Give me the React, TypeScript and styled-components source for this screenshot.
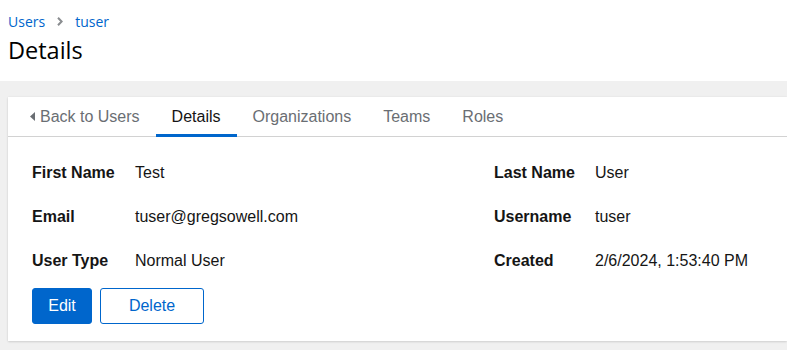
import React from 'react';
import styled, { createGlobalStyle } from 'styled-components';

const fields = [
  { label: 'First Name', value: 'Test' },
  { label: 'Last Name', value: 'User' },
  { label: 'Email', value: 'tuser@gregsowell.com' },
  { label: 'Username', value: 'tuser' },
  { label: 'User Type', value: 'Normal User' },
  { label: 'Created', value: '2/6/2024, 1:53:40 PM' },
];

const tabs = ['Details', 'Organizations', 'Teams', 'Roles'];

const App = () => {
  return (
    <>
      <GlobalStyle />
      <Page>
        <Header>
          <Breadcrumb>
            <Crumb>Users</Crumb>
            <Divider>
              <svg width="6" height="9" viewBox="0 0 6 9">
                <path d="M1 0.8 L4.6 4.5 L1 8.2" fill="none" stroke="#8a8d90" strokeWidth="2" />
              </svg>
            </Divider>
            <Crumb>tuser</Crumb>
          </Breadcrumb>
          <Title>Details</Title>
        </Header>
        <Main>
          <Card>
            <TabList>
              <Tab>
                <svg width="5" height="9" viewBox="0 0 5 9">
                  <path d="M5 0 L0 4.5 L5 9 Z" fill="#6a6e73" />
                </svg>
                Back to Users
              </Tab>
              {tabs.map((t) => (
                <Tab key={t} active={t === 'Details'}>
                  {t}
                </Tab>
              ))}
            </TabList>
            <Body>
              <FieldGrid>
                {fields.map((f, i) => (
                  <Field key={f.label}>
                    <Label right={i % 2 === 1}>{f.label}</Label>
                    <Value>{f.value}</Value>
                  </Field>
                ))}
              </FieldGrid>
              <Actions>
                <Button variant="primary">Edit</Button>
                <Button variant="secondary">Delete</Button>
              </Actions>
            </Body>
          </Card>
        </Main>
      </Page>
    </>
  );
};

export default App;

const GlobalStyle = createGlobalStyle`
  body {
    margin: 0;
    background: #f0f0f0;
    font-family: "Liberation Sans", Arial, sans-serif;
    color: #151515;
    overflow: hidden;
  }
`;

const Page = styled.div`
  width: 787px;
  height: 350px;
  background: #f0f0f0;
`;

const Header = styled.div`
  background: #fff;
  height: 81px;
  box-sizing: border-box;
  padding: 11px 8px 0;
`;

const Breadcrumb = styled.div`
  display: flex;
  align-items: center;
  height: 21px;
  font-family: "Open Sans", sans-serif;
  font-size: 14px;
`;

const Crumb = styled.span`
  color: #0066cc;
`;

const Divider = styled.span`
  display: flex;
  align-items: center;
  margin: 0 12px 0 12px;
`;

const Title = styled.h1`
  margin: 3px 0 0;
  font-family: "Open Sans", sans-serif;
  font-weight: 400;
  font-size: 23.5px;
  line-height: 30px;
  color: #000;
`;

const Main = styled.div`
  padding: 16px 0 0 8px;
`;

const Card = styled.div`
  background: #fff;
  height: 244px;
  box-shadow: 0 1px 2px rgba(3, 3, 3, 0.12), 0 0 2px rgba(3, 3, 3, 0.06);
`;

const TabList = styled.div`
  display: flex;
  padding-left: 6px;
  border-bottom: 1px solid #d2d2d2;
  height: 39px;
`;

const Tab = styled.div<{ active?: boolean }>`
  display: flex;
  align-items: center;
  gap: 5px;
  padding: 0 16px;
  font-size: 16px;
  color: ${({ active }) => (active ? '#151515' : '#6a6e73')};
  position: relative;
  ${({ active }) =>
    active &&
    `
    &::after {
      content: '';
      position: absolute;
      left: 0;
      right: 0;
      bottom: -1px;
      height: 3px;
      background: #0066cc;
    }
  `}
`;

const Body = styled.div`
  padding: 24px 24px 0;
`;

const FieldGrid = styled.div`
  display: grid;
  grid-template-columns: 462px 1fr;
  row-gap: 20px;
`;

const Field = styled.div`
  display: flex;
  align-items: center;
  height: 24px;
  font-size: 16px;
`;

const Label = styled.span<{ right?: boolean }>`
  font-weight: 700;
  width: ${({ right }) => (right ? '101px' : '103px')};
  flex-shrink: 0;
`;

const Value = styled.span`
  color: #151515;
`;

const Actions = styled.div`
  display: flex;
  gap: 8px;
  margin-top: 15px;
`;

const Button = styled.button<{ variant: 'primary' | 'secondary' }>`
  height: 36px;
  box-sizing: border-box;
  border-radius: 3px;
  font-family: "Liberation Sans", Arial, sans-serif;
  font-size: 16px;
  padding: 0;
  width: ${({ variant }) => (variant === 'primary' ? '60px' : '104px')};
  background: ${({ variant }) => (variant === 'primary' ? '#0066cc' : '#fff')};
  color: ${({ variant }) => (variant === 'primary' ? '#fff' : '#0066cc')};
  border: 1px solid #0066cc;
`;
